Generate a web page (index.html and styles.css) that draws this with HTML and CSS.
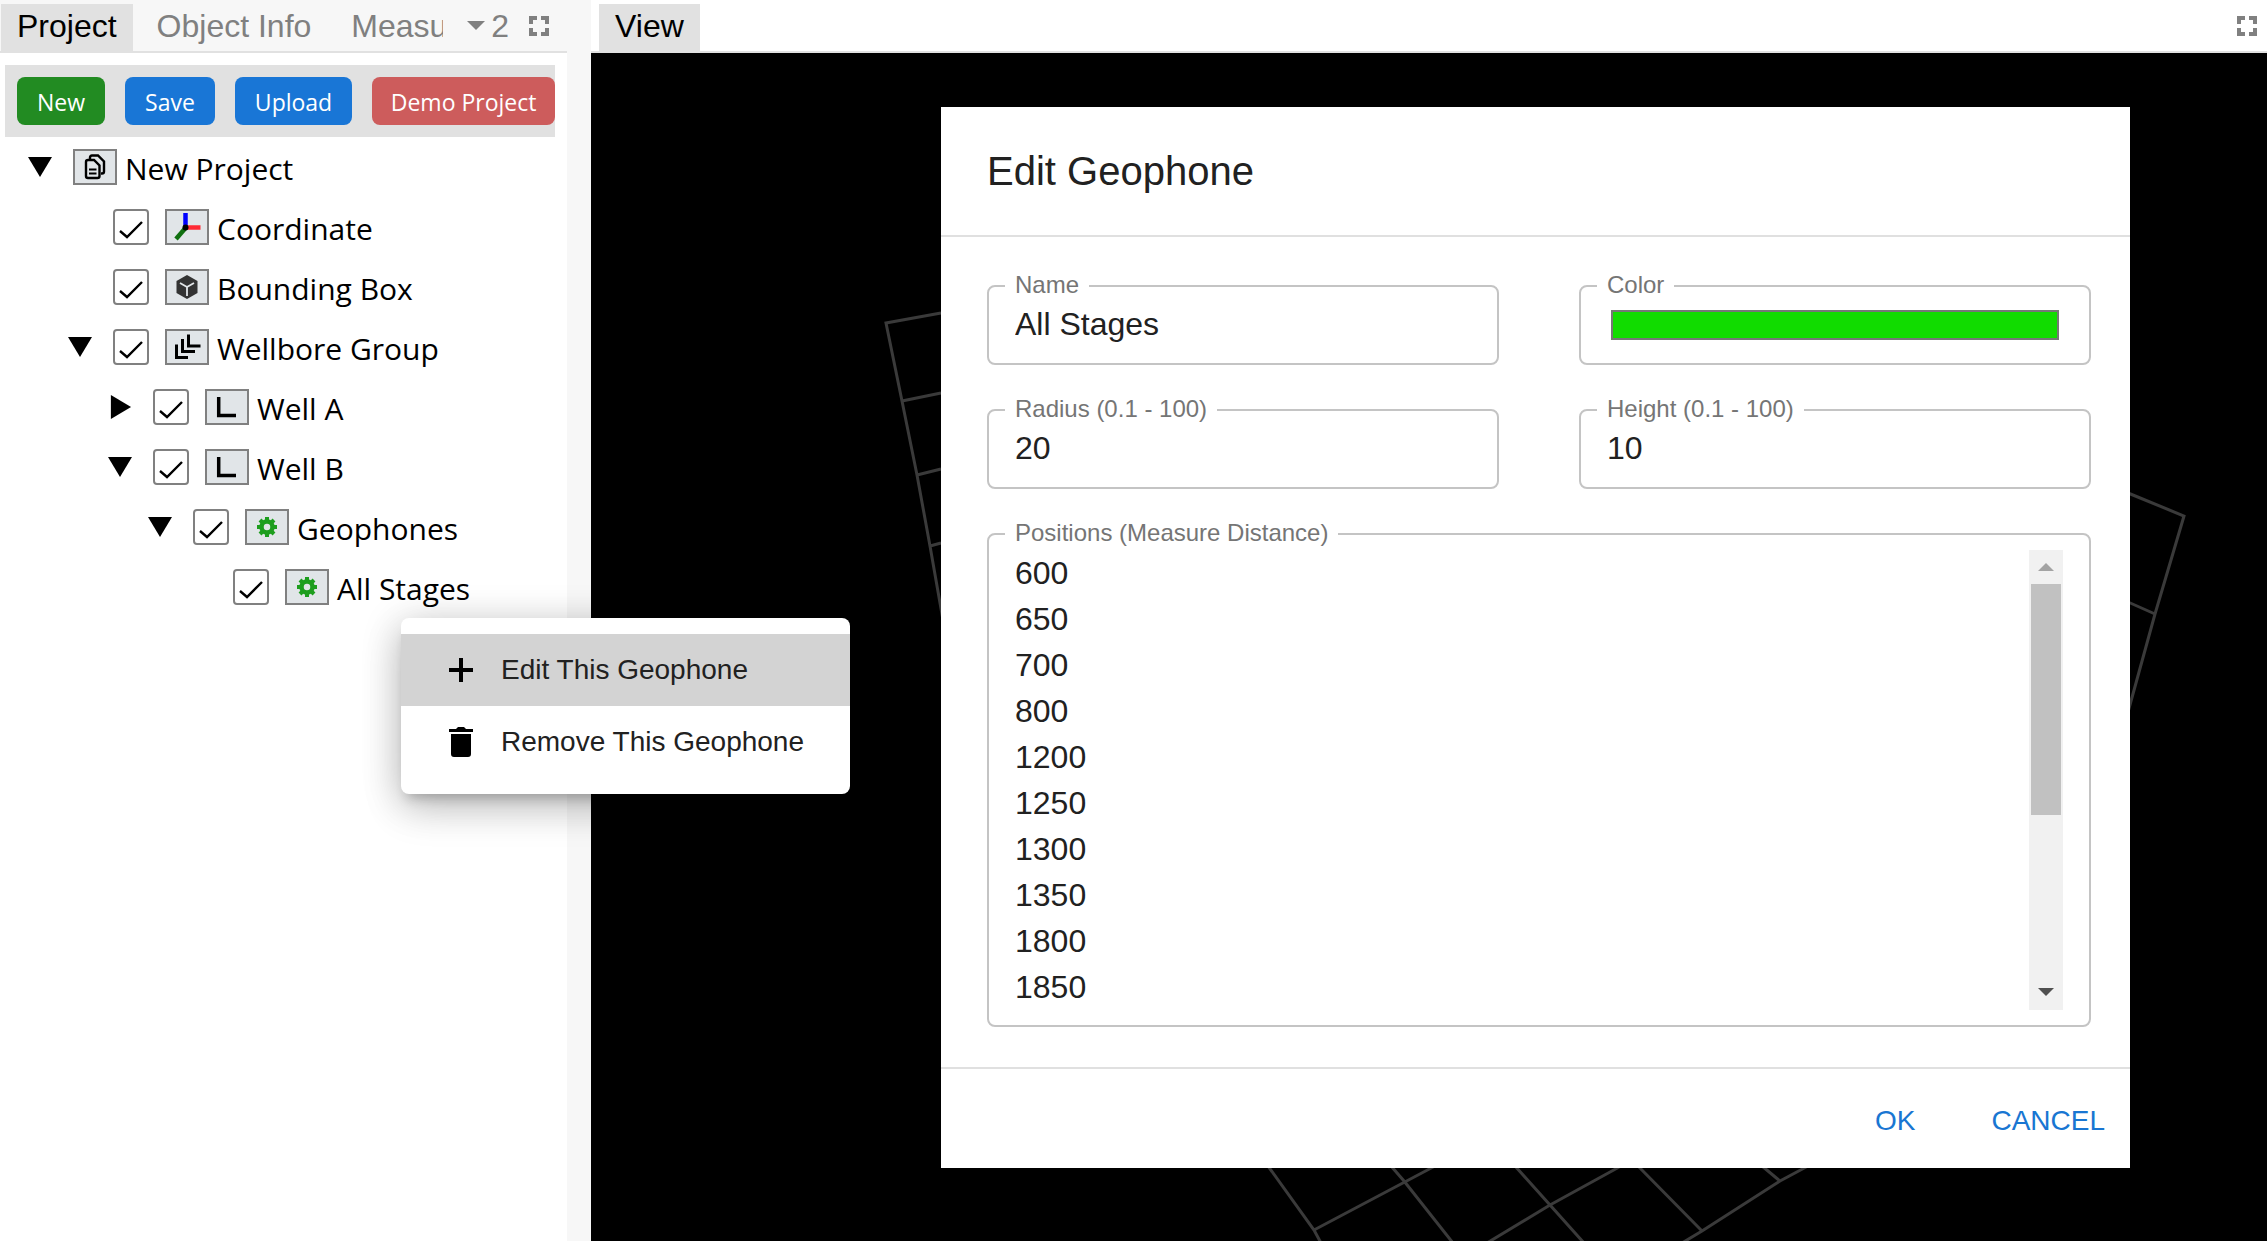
FILE: index.html
```html
<!DOCTYPE html>
<html lang="en">
<head>
<meta charset="utf-8">
<title>New Project</title>
<link rel="stylesheet" href="styles.css">
</head>
<body>
<svg class="sprite" aria-hidden="true">
  <symbol id="max" viewBox="0 0 20 20"><path d="M0 0h8v4H4v4H0zM12 0h8v8h-4V4h-4zM0 12h4v4h4v4H0zM16 12h4v8h-8v-4h4z" fill="#808080"/></symbol>
  <symbol id="copy" viewBox="0 0 40 32"><path d="M15 8V6.500Q15 4.500 17 4.500H23L29 10.500V20.500Q29 22.500 27 22.500H26" fill="none" stroke="#000" stroke-width="2.400"/><path d="M13 9H19L24.500 14.500V25Q24.500 27 22.500 27H13Q11 27 11 25V11Q11 9 13 9z" fill="none" stroke="#000" stroke-width="2.400"/><path d="M14 18.500h7.500M14 22.500h7.500" stroke="#000" stroke-width="2"/></symbol>
  <symbol id="axes" viewBox="0 0 40 32"><path d="M18.500 17V2" stroke="#00f" stroke-width="4.500"/><path d="M18.500 16.500h15" stroke="#ff2a35" stroke-width="4.500"/><path d="M18.500 17l-9.500 11" stroke="#107010" stroke-width="4.500"/><circle cx="18.500" cy="16.500" r="3"/></symbol>
  <symbol id="cube" viewBox="0 0 40 32"><path d="M20 4l10.500 6v12l-10.500 6L9.500 22V10z" fill="#333"/><path d="M13 12l7 4 7-4M20 16v9" fill="none" stroke="#e1e5e8" stroke-width="1.800"/></symbol>
  <symbol id="wells" viewBox="0 0 40 32"><path d="M9.500 13.500v13H21M15.500 8v12.500H28M21.500 3.500v11.500H33.500" fill="none" stroke="#000" stroke-width="3"/></symbol>
  <symbol id="well" viewBox="0 0 40 32"><path d="M11.700 6v18.500H29" fill="none" stroke="#000" stroke-width="3.500"/></symbol>
  <symbol id="gear" viewBox="0 0 40 32"><circle cx="20" cy="16" r="5.500" fill="none" stroke="#1e9e1e" stroke-width="4.500"/><path d="M20 6v4M20 22v4M10 16h4M26 16h4M13 9l3 3M24 20l3 3M13 23l3-3M24 12l3-3" stroke="#1e9e1e" stroke-width="4"/></symbol>
</svg>

<aside class="side">
  <div class="tabs">
    <button class="tab active">Project</button>
    <button class="tab">Object Info</button>
    <button class="tab cut">Measu</button>
    <button class="more"><span class="caret"></span>2</button>
    <button class="max" aria-label="Maximize"><svg><use href="#max"/></svg></button>
  </div>
  <div class="toolbar">
    <button class="btn green">New</button>
    <button class="btn">Save</button>
    <button class="btn">Upload</button>
    <button class="btn red">Demo Project</button>
  </div>
  <ul class="tree">
    <li><div class="row"><button class="toggle open" aria-label="Collapse"></button><svg class="ico"><use href="#copy"/></svg><span class="name">New Project</span></div>
    <ul>
      <li><div class="row"><span class="toggle"></span><input type="checkbox" id="n1" checked><svg class="ico"><use href="#axes"/></svg><label class="name" for="n1">Coordinate</label></div></li>
      <li><div class="row"><span class="toggle"></span><input type="checkbox" id="n2" checked><svg class="ico"><use href="#cube"/></svg><label class="name" for="n2">Bounding Box</label></div></li>
      <li><div class="row"><button class="toggle open" aria-label="Collapse"></button><input type="checkbox" id="n3" checked><svg class="ico"><use href="#wells"/></svg><label class="name" for="n3">Wellbore Group</label></div>
      <ul>
        <li><div class="row"><button class="toggle closed" aria-label="Expand"></button><input type="checkbox" id="n4" checked><svg class="ico"><use href="#well"/></svg><label class="name" for="n4">Well A</label></div></li>
        <li><div class="row"><button class="toggle open" aria-label="Collapse"></button><input type="checkbox" id="n5" checked><svg class="ico"><use href="#well"/></svg><label class="name" for="n5">Well B</label></div>
        <ul>
          <li><div class="row"><button class="toggle open" aria-label="Collapse"></button><input type="checkbox" id="n6" checked><svg class="ico"><use href="#gear"/></svg><label class="name" for="n6">Geophones</label></div>
          <ul>
            <li><div class="row"><span class="toggle"></span><input type="checkbox" id="n7" checked><svg class="ico"><use href="#gear"/></svg><label class="name" for="n7">All Stages</label></div></li>
          </ul></li>
        </ul></li>
      </ul></li>
    </ul></li>
  </ul>
</aside>

<main class="main">
  <div class="tabs light">
    <button class="tab active">View</button>
    <button class="max" aria-label="Maximize"><svg><use href="#max"/></svg></button>
  </div>
  <div class="canvas">
    <svg class="grid" viewBox="591 53 1676 1188" preserveAspectRatio="xMinYMin meet">
      <path d="M941 313L886 323L902 401L917 475L930 546L943 620M902 401L941 393M917 475L941 469M930 546L941 543"/>
      <path d="M2128 493L2184 516L2155 614L2128 712M2128 602L2155 614"/>
      <path d="M1268 1166L1314 1230L1321 1243M1314 1230L1435 1166M1391 1166L1404 1181L1453 1243M1515 1166L1550 1205L1584 1243M1621 1166L1550 1205L1487 1243M1638 1166L1702 1231M1762 1166L1780 1181M1808 1166L1780 1181L1702 1231L1682 1243"/>
    </svg>
    <form class="dialog" role="dialog" aria-labelledby="dlg">
      <h2 id="dlg">Edit Geophone</h2>
      <div class="fields">
        <fieldset><legend><label for="name">Name</label></legend><input id="name" type="text" value="All Stages"></fieldset>
        <fieldset><legend><label for="color">Color</label></legend><input id="color" type="color" value="#11dc00"></fieldset>
        <fieldset><legend><label for="radius">Radius (0.1 - 100)</label></legend><input id="radius" type="text" value="20"></fieldset>
        <fieldset><legend><label for="height">Height (0.1 - 100)</label></legend><input id="height" type="text" value="10"></fieldset>
        <fieldset class="wide"><legend><label for="pos">Positions (Measure Distance)</label></legend>
          <div class="scroller">
            <textarea id="pos" rows="10">600
650
700
800
1200
1250
1300
1350
1800
1850</textarea>
            <div class="scrollbar" aria-hidden="true">
              <svg viewBox="0 0 34 34"><path d="M9 21l8-8 8 8z" fill="#a3a3a3"/></svg>
              <div class="track"><div class="thumb"></div></div>
              <svg viewBox="0 0 34 34"><path d="M9 12l8 8 8-8z" fill="#505050"/></svg>
            </div>
          </div>
        </fieldset>
      </div>
      <div class="actions"><button type="button">OK</button><button type="button">CANCEL</button></div>
    </form>
  </div>
</main>

<div class="menu" role="menu">
  <button role="menuitem" class="hover"><svg viewBox="0 0 40 40"><path d="M8 20h24M20 8v24" stroke="#000" stroke-width="4"/></svg>Edit This Geophone</button>
  <button role="menuitem"><svg viewBox="0 0 40 40"><path d="M8 7h7l2-2h6l2 2h7v3H8zM10 12h20v20a3 3 0 0 1-3 3H13a3 3 0 0 1-3-3z"/></svg>Remove This Geophone</button>
</div>
</body>
</html>
```
FILE: styles.css
```css
* { box-sizing: border-box; }
body {
  margin: 0;
  height: 100vh;
  display: flex;
  gap: 24px;
  overflow: hidden;
  background: #f7f7f7;
  font-family: "Liberation Sans", Arial, sans-serif;
  color: #000;
}
button { border: 0; padding: 0; background: none; font: inherit; color: inherit; }
.sprite { position: absolute; width: 0; height: 0; }

.side { flex: none; width: 567px; background: #fff; }
.main { flex: 1; min-width: 0; display: flex; flex-direction: column; background: #fff; }

.tabs {
  display: flex;
  align-items: center;
  height: 53px;
  padding: 0 18px 0 1px;
  border-bottom: 2px solid #e1e1e1;
  background: #f7f7f7;
  font-size: 32px;
  color: #808080;
}
.tabs.light { background: #fff; padding: 0 10px 0 8px; }
.tab { flex: none; align-self: flex-end; height: 47px; padding: 0 16px 3px; margin-right: 8px; }
.tab.active { background: #e1e1e1; color: #000; }
.tab.cut { flex: 1; min-width: 0; padding-right: 0; margin-right: 24px; overflow: hidden; text-align: left; }
.more { display: flex; align-items: center; gap: 6px; margin-right: 20px; line-height: 40px; }
.caret { border: 9px solid transparent; border-top-color: #808080; border-bottom: 0; }
.max { margin-left: auto; height: 20px; }
.max svg { display: block; width: 20px; height: 20px; }

.toolbar {
  display: flex;
  gap: 20px;
  margin: 12px 12px 0 5px;
  padding: 12px 0 12px 12px;
  background: #e1e1e1;
}
.btn {
  flex: none;
  height: 48px;
  padding: 2px 20px 0;
  border-radius: 8px;
  background: #1976d6;
  color: #fff;
  font: 23px/46px "Open Sans", "Noto Sans", sans-serif;
  white-space: nowrap;
}
.btn.green { background: #228b22; }
.btn.red { flex: 1; padding-left: 0; padding-right: 0; background: #cd5c5c; }

.tree, .tree ul { list-style: none; margin: 0; padding: 0; }
.tree { padding-left: 28px; font: 30px/56px "Open Sans", "Noto Sans", sans-serif; }
.tree ul { padding-left: 40px; }
.row { display: flex; align-items: center; height: 60px; white-space: nowrap; }
.name { padding-top: 4px; }
.toggle { flex: none; width: 24px; height: 24px; margin-right: 21px; }
.toggle.open { background: #000; clip-path: polygon(0 8%, 100% 8%, 50% 92%); }
.toggle.closed { background: #000; clip-path: polygon(12% 0, 96% 50%, 12% 100%); }
.row input {
  appearance: none;
  flex: none;
  width: 36px;
  height: 36px;
  margin: 0 16px 0 0;
  border: 2px solid #808080;
  border-radius: 4px;
  background: #fff url('data:image/svg+xml,<svg xmlns="http://www.w3.org/2000/svg" viewBox="0 0 32 32"><path d="M5 20l7 6 15-15" fill="none" stroke="black" stroke-width="2.400"/></svg>');
}
.ico { flex: none; width: 44px; height: 36px; margin-right: 8px; border: 2px solid #808080; background: #e1e5e8; }

.canvas { position: relative; flex: 1; background: #000; overflow: hidden; }
.grid { position: absolute; left: 0; top: 0; width: 100%; height: auto; }
.grid path { fill: none; stroke: #3a3a3a; stroke-width: 3; }

.dialog {
  position: absolute;
  top: 54px;
  left: 350px;
  right: 137px;
  background: #fff;
  color: #212121;
}
.dialog h2 { margin: 0; padding: 40px 46px; font-weight: 400; font-size: 40px; line-height: 48px; }
.fields {
  display: grid;
  grid-template-columns: 1fr 1fr;
  gap: 32px 80px;
  padding: 36px 39px 40px 46px;
  border-top: 2px solid #e0e0e0;
  border-bottom: 2px solid #e0e0e0;
}
fieldset { min-width: 0; margin: 0; padding: 0 26px 12px 16px; border: 2px solid #c4c4c4; border-radius: 8px; }
legend { padding: 0 10px 2px; font-size: 24px; line-height: 24px; color: #757575; }
fieldset input, textarea {
  display: block;
  width: 100%;
  border: 0;
  padding: 0 10px;
  background: none;
  font: 32px/46px "Liberation Sans", Arial, sans-serif;
  color: #212121;
  outline: 0;
}
fieldset input { height: 52px; padding-bottom: 2px; }
fieldset input[type="color"] { appearance: none; height: 30px; margin: 11px 0; padding: 0 4px 0 14px; }
input[type="color"]::-webkit-color-swatch-wrapper { padding: 0; }
input[type="color"]::-webkit-color-swatch { border: 2px solid #767676; border-radius: 0; }
.wide { grid-column: 1 / -1; padding-bottom: 15px; }
.scroller { display: flex; margin-top: 3px; }
textarea { flex: 1; min-width: 0; resize: none; overflow: hidden; }
.scrollbar { flex: none; display: flex; flex-direction: column; width: 34px; background: #f1f1f1; }
.scrollbar svg { display: block; flex: none; height: 34px; }
.track { flex: 1; padding: 0 2px; }
.thumb { height: 59%; background: #c1c1c1; }
.actions { display: flex; justify-content: flex-end; gap: 76px; padding: 24px 25px 19px; color: #1976d2; font-size: 28px; line-height: 56px; }

.menu {
  position: absolute;
  left: 401px;
  top: 618px;
  width: 449px;
  padding: 16px 0;
  border-radius: 8px;
  background: #fff;
  box-shadow: 0 10px 12px -6px rgba(0,0,0,.2), 0 16px 40px rgba(0,0,0,.14), 0 6px 40px rgba(0,0,0,.2);
}
.menu button { display: flex; align-items: center; gap: 20px; width: 100%; height: 72px; padding-left: 40px; font-size: 28px; color: #212121; }
.menu svg { width: 40px; height: 40px; }
.menu .hover { background: #d3d3d3; }
```
